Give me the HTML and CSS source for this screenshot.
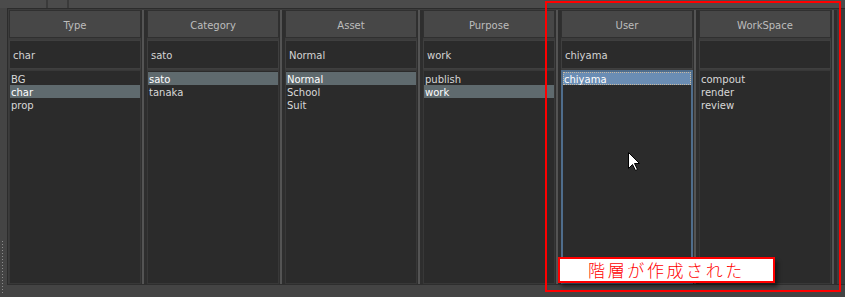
FILE: index.html
```html
<!DOCTYPE html>
<html lang="ja">
<head>
  <meta charset="UTF-8" />
  <title>Path Browser</title>
  <link rel="stylesheet" href="styles.css">
</head>
<body>
  <div class="topbar">
    <span class="seg seg1"></span>
    <span class="seg seg2"></span>
    <span class="seg seg3"></span>
  </div>

  <div class="main">
    <div class="grip"><div class="dots"></div></div>
    <div class="panel">
      <div class="col">
        <div class="head">Type</div>
        <div class="filter">char</div>
        <ul class="list">
          <li>BG</li>
          <li class="sel">char</li>
          <li>prop</li>
        </ul>
      </div>
      <div class="split"></div>
      <div class="col">
        <div class="head">Category</div>
        <div class="filter">sato</div>
        <ul class="list">
          <li class="sel">sato</li>
          <li>tanaka</li>
        </ul>
      </div>
      <div class="split"></div>
      <div class="col">
        <div class="head">Asset</div>
        <div class="filter">Normal</div>
        <ul class="list">
          <li class="sel">Normal</li>
          <li>School</li>
          <li>Suit</li>
        </ul>
      </div>
      <div class="split"></div>
      <div class="col">
        <div class="head">Purpose</div>
        <div class="filter">work</div>
        <ul class="list">
          <li>publish</li>
          <li class="sel">work</li>
        </ul>
      </div>
      <div class="split"></div>
      <div class="col">
        <div class="head">User</div>
        <div class="filter">chiyama</div>
        <ul class="list focus">
          <li class="cur">chiyama</li>
        </ul>
      </div>
      <div class="split"></div>
      <div class="col">
        <div class="head">WorkSpace</div>
        <div class="filter"></div>
        <ul class="list">
          <li>compout</li>
          <li>render</li>
          <li>review</li>
        </ul>
      </div>
      <div class="split"></div>
    </div>
  </div>

  <div class="statusbar"></div>

  <!-- annotation drawn over the screenshot -->
  <div class="redframe"></div>
  <div class="note">階層が作成された</div>
  <svg class="cursor" width="13" height="20" viewBox="0 0 13 20">
    <path d="M0.5 0.5 L0.5 16.5 L4.5 12.5 L7.5 18.5 L9.5 17.5 L6.5 11.5 L11.5 11.5 Z" fill="#fff" stroke="#000" stroke-width="1"/>
  </svg>
</body>
</html>
```

FILE: styles.css
```css
body {
  margin: 0;
  width: 845px;
  height: 297px;
  overflow: hidden;
  background: #444;
  font-family: "DejaVu Sans", "Liberation Sans", sans-serif;
  font-size: 10px;
  position: relative;
}
.topbar {
  display: flex;
  height: 8px;
  background: #4b4b4b;
}
.seg {
  height: 8px;
}
.seg1 {
  width: 46px;
  border-right: 2px solid #3a3a3a;
}
.seg2 {
  width: 19px;
  border-right: 2px solid #3a3a3a;
}
.seg3 {
  flex: 1;
}
.main {
  display: flex;
  height: 277px;
}
.grip {
  width: 7px;
  display: flex;
  flex-direction: column;
  justify-content: flex-end;
}
.dots {
  width: 1px;
  height: 54px;
  margin-left: 2px;
  margin-bottom: -10px;
  background: repeating-linear-gradient(#8c8c8c 0 1px, transparent 1px 3px);
}
.panel {
  flex: 1;
  display: flex;
  background: #3c3c3c;
  border-top: 1px solid #2c2c2c;
  border-left: 1px solid #2c2c2c;
  border-bottom: 1px solid #2e2e2e;
  padding: 1px 0 0 1px;
}
.col {
  width: 132px;
  display: flex;
  flex-direction: column;
}
.split {
  width: 6px;
  background: linear-gradient(90deg, #2f2f2f 0 1px, #545454 1px 3px, #2e2e2e 3px 6px);
}
.head {
  box-sizing: border-box;
  height: 28px;
  background: #474747;
  border: 1px solid #303030;
  color: #bdbdbd;
  text-align: center;
  line-height: 30px;
}
.filter {
  box-sizing: border-box;
  height: 29px;
  margin-top: 2px;
  background: #2b2b2b;
  border: 1px solid #3f3f3f;
  color: #d4d4d4;
  line-height: 30px;
  padding-left: 3px;
}
.list {
  flex: 1;
  margin: 1px 0 0;
  padding: 1px 0 0;
  list-style: none;
  background: #2b2b2b;
  border: 1px solid #383838;
}
.list li {
  height: 13px;
  line-height: 15px;
  padding-left: 1px;
  color: #d8d8d8;
}
.list li.sel {
  background: #5f6a6e;
  color: #fff;
}
.list.focus {
  border: 2px solid #4f6d8c;
  padding-top: 0;
}
.list li.cur {
  box-sizing: border-box;
  background: #6a8db4;
  color: #fff;
  border: 1px dotted #c8b9a0;
  padding-left: 0;
  line-height: 13px;
}
.statusbar {
  height: 12px;
  background: #444;
}
.redframe {
  position: absolute;
  left: 545px;
  top: 1px;
  width: 292px;
  height: 287px;
  border: 2px solid #ff0000;
}
.note {
  position: absolute;
  left: 558px;
  top: 257px;
  box-sizing: border-box;
  width: 217px;
  height: 26px;
  background: #fff;
  border: 2px solid #ff0000;
  box-shadow: 3px 4px 4px rgba(0, 0, 0, 0.45);
  color: #ff0000;
  font-family: "Noto Sans CJK JP", sans-serif;
  font-size: 17px;
  font-weight: 300;
  letter-spacing: 2.6px;
  text-align: center;
  line-height: 21px;
}
.cursor {
  position: absolute;
  left: 628px;
  top: 152px;
}
```
